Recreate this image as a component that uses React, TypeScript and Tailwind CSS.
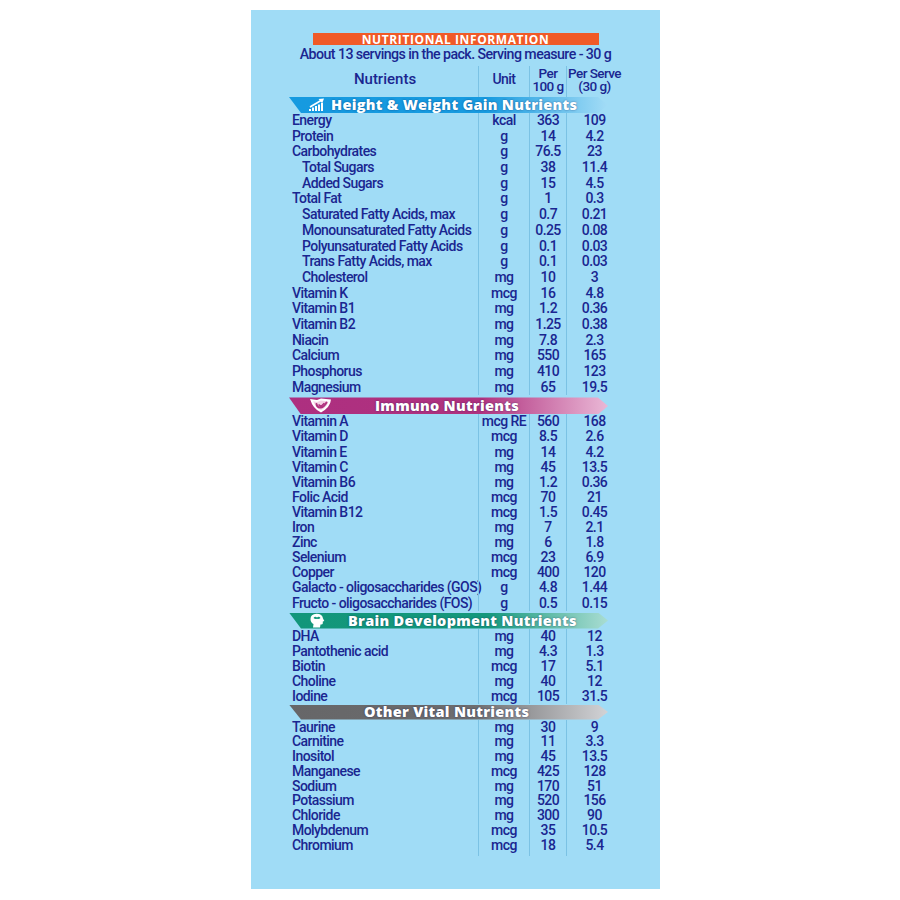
import React from "react"

type Row = [string, string, string, string, boolean?]

type Section = {
  title: string
  bg: string
  bar: string
  row: string
  titleCls: string
  icon?: React.ReactNode
  rows: Row[]
}

function GrowthIcon() {
  return (
    <svg width="18" height="14" viewBox="0 0 18 14" fill="white">
      <rect x="1" y="11" width="2" height="2" />
      <rect x="4" y="9.5" width="2" height="3.5" />
      <rect x="7" y="8" width="2" height="5" />
      <rect x="10" y="6.5" width="2" height="6.5" />
      <rect x="13" y="5" width="2" height="8" />
      <path d="M2 9 L13 2.5" stroke="white" strokeWidth="1.6" fill="none" />
      <path d="M10.5 1 L16 0.5 L14.2 5.2 Z" />
    </svg>
  )
}

function ShieldIcon() {
  return (
    <svg width="25" height="15" viewBox="0 0 25 15">
      <path d="M2 1 L9 2 L13 0.5 L23 1.5 Q22.5 9 13 14.5 Q5 11 2 1 Z" fill="white" />
      <path d="M5 3.2 L9 3.9 L13 2.6 L20.5 3.4 Q19.5 8.5 13 12.3 Q7.5 9.5 5 3.2 Z" fill="#f3d3e6" />
      <path d="M8.5 6 Q9 10 13 9.5 Q16 9 18.5 4.5" stroke="#b0327f" strokeWidth="2" fill="none" strokeLinecap="round" />
      <path d="M11 7 L13 8.5 L16 5.5" stroke="#b0327f" strokeWidth="1.6" fill="none" strokeLinecap="round" />
    </svg>
  )
}

function HeadIcon() {
  return (
    <svg width="16" height="15" viewBox="0 0 16 15" fill="white">
      <path d="M4 14.5 L4.5 11 Q1.5 9.5 1.5 6 Q1.5 1 7.5 0.8 Q13.5 0.8 14 5.5 L15.3 8 L13.8 8.5 L13.8 10.5 Q13.5 11.8 11.5 11.5 L11 14.5 Z" />
      <path d="M4.5 5 Q6 3 8 4.5 Q10 3 11.5 5 Q10 6.5 8 5.8 Q6 6.5 4.5 5 Z" fill="#14987b" />
    </svg>
  )
}

const sections: Section[] = [
  {
    title: "Height & Weight Gain Nutrients",
    bg: "bg-[linear-gradient(90deg,#169ae0_0%,#179be0_62%,#a3dcf6_100%)]",
    bar: "h-[16px]",
    row: "h-[15.7px] leading-[15.7px]",
    titleCls: "pl-[19px] gap-[5px]",
    icon: <GrowthIcon />,
    rows: [
      ["Energy", "kcal", "363", "109"],
      ["Protein", "g", "14", "4.2"],
      ["Carbohydrates", "g", "76.5", "23"],
      ["Total Sugars", "g", "38", "11.4", true],
      ["Added Sugars", "g", "15", "4.5", true],
      ["Total Fat", "g", "1", "0.3"],
      ["Saturated Fatty Acids, max", "g", "0.7", "0.21", true],
      ["Monounsaturated Fatty Acids", "g", "0.25", "0.08", true],
      ["Polyunsaturated Fatty Acids", "g", "0.1", "0.03", true],
      ["Trans Fatty Acids, max", "g", "0.1", "0.03", true],
      ["Cholesterol", "mg", "10", "3", true],
      ["Vitamin K", "mcg", "16", "4.8"],
      ["Vitamin B1", "mg", "1.2", "0.36"],
      ["Vitamin B2", "mg", "1.25", "0.38"],
      ["Niacin", "mg", "7.8", "2.3"],
      ["Calcium", "mg", "550", "165"],
      ["Phosphorus", "mg", "410", "123"],
      ["Magnesium", "mg", "65", "19.5"],
    ],
  },
  {
    title: "Immuno Nutrients",
    bg: "bg-[linear-gradient(90deg,#ad2f80_0%,#b0327f_60%,#eab8d6_100%)]",
    bar: "mt-[2px] h-[17px]",
    row: "h-[15.1px] leading-[15.1px]",
    titleCls: "pl-[19px] gap-[42px]",
    icon: <ShieldIcon />,
    rows: [
      ["Vitamin A", "mcg RE", "560", "168"],
      ["Vitamin D", "mcg", "8.5", "2.6"],
      ["Vitamin E", "mg", "14", "4.2"],
      ["Vitamin C", "mg", "45", "13.5"],
      ["Vitamin B6", "mg", "1.2", "0.36"],
      ["Folic Acid", "mcg", "70", "21"],
      ["Vitamin B12", "mcg", "1.5", "0.45"],
      ["Iron", "mg", "7", "2.1"],
      ["Zinc", "mg", "6", "1.8"],
      ["Selenium", "mcg", "23", "6.9"],
      ["Copper", "mcg", "400", "120"],
      ["Galacto - oligosaccharides (GOS)", "g", "4.8", "1.44"],
      ["Fructo - oligosaccharides (FOS)", "g", "0.5", "0.15"],
    ],
  },
  {
    title: "Brain Development Nutrients",
    bg: "bg-[linear-gradient(90deg,#12967a_0%,#14987c_62%,#a9ddd2_100%)]",
    bar: "mt-[2px] h-[16px]",
    row: "h-[15px] leading-[15px]",
    titleCls: "pl-[20px] gap-[23px]",
    icon: <HeadIcon />,
    rows: [
      ["DHA", "mg", "40", "12"],
      ["Pantothenic acid", "mg", "4.3", "1.3"],
      ["Biotin", "mcg", "17", "5.1"],
      ["Choline", "mg", "40", "12"],
      ["Iodine", "mcg", "105", "31.5"],
    ],
  },
  {
    title: "Other Vital Nutrients",
    bg: "bg-[linear-gradient(90deg,#666668_0%,#6d6d6f_58%,#d2d3d6_100%)]",
    bar: "mt-[1px] h-[15px]",
    row: "h-[14.75px] leading-[14.75px]",
    titleCls: "pl-[75px]",
    rows: [
      ["Taurine", "mg", "30", "9"],
      ["Carnitine", "mg", "11", "3.3"],
      ["Inositol", "mg", "45", "13.5"],
      ["Manganese", "mcg", "425", "128"],
      ["Sodium", "mg", "170", "51"],
      ["Potassium", "mg", "520", "156"],
      ["Chloride", "mg", "300", "90"],
      ["Molybdenum", "mcg", "35", "10.5"],
      ["Chromium", "mcg", "18", "5.4"],
    ],
  },
]

function Banner({ s }: { s: Section }) {
  return (
    <div
      className={`-ml-[3px] w-[319px] ${s.bar} ${s.bg} flex items-center ${s.titleCls} [clip-path:polygon(0_0,309px_0,319px_50%,309px_100%,12px_100%)]`}
    >
      {s.icon}
      <span className="[font-family:'Open_Sans',sans-serif] text-[14.5px] leading-[12px] font-extrabold tracking-[0.02em] text-white [text-shadow:0_0_2px_rgba(0,20,80,0.55)]">
        {s.title}
      </span>
    </div>
  )
}

function DataRow({ r, cls }: { r: Row; cls: string }) {
  const [name, unit, per100, perServe, sub] = r
  return (
    <div className={`grid grid-cols-[186px_51px_37px_56px] ${cls}`}>
      <div className={`whitespace-nowrap ${sub ? "pl-[10px]" : ""}`}>{name}</div>
      <div className="border-l border-[#7bc2e4] text-center whitespace-nowrap">{unit}</div>
      <div className="border-l border-[#7bc2e4] text-center">{per100}</div>
      <div className="border-l border-[#7bc2e4] text-center">{perServe}</div>
    </div>
  )
}

export default function App() {
  return (
    <div className="w-[900px] h-[900px] bg-white pt-[10px] pl-[251px]">
      <div className="w-[409px] h-[879px] bg-[#a0dcf6] pt-[23px] text-[#1a2690] [font-family:Roboto,sans-serif] font-medium text-[14px] tracking-[-0.04em]">
        <div className="mx-auto w-[286px] h-[12px] bg-[#f05a28] flex items-center justify-center">
          <span className="[font-family:'Open_Sans',sans-serif] text-[12px] leading-[11px] font-bold tracking-[0.05em] text-white">
            NUTRITIONAL INFORMATION
          </span>
        </div>
        <p className="h-[18px] leading-[18px] text-center text-[14.2px] tracking-[-0.04em]">
          About 13 servings in the pack. Serving measure - 30 g
        </p>

        <div className="mt-[3px] ml-[41px] w-[330px]">
          <div className="grid grid-cols-[186px_51px_37px_56px] h-[31px]">
            <div className="flex items-center justify-center pb-[4px] text-[15px] tracking-[0]">Nutrients</div>
            <div className="border-l border-[#7bc2e4] flex items-center justify-center pb-[4px]">Unit</div>
            <div className="border-l border-[#7bc2e4] flex flex-col items-center pt-[1px] text-[13.5px] leading-[13px]">
              <span>Per</span>
              <span className="whitespace-nowrap">100 g</span>
            </div>
            <div className="border-l border-[#7bc2e4] flex flex-col items-center pt-[1px] text-[13.5px] leading-[13px]">
              <span className="whitespace-nowrap">Per Serve</span>
              <span className="whitespace-nowrap">(30 g)</span>
            </div>
          </div>

          {sections.map((s) => (
            <div key={s.title}>
              <Banner s={s} />
              {s.rows.map((r) => (
                <DataRow key={r[0]} r={r} cls={s.row} />
              ))}
            </div>
          ))}

          <div className="grid grid-cols-[186px_51px_37px_56px] h-[4px]">
            <div />
            <div className="border-l border-[#7bc2e4]" />
            <div className="border-l border-[#7bc2e4]" />
            <div className="border-l border-[#7bc2e4]" />
          </div>
        </div>
      </div>
    </div>
  )
}
